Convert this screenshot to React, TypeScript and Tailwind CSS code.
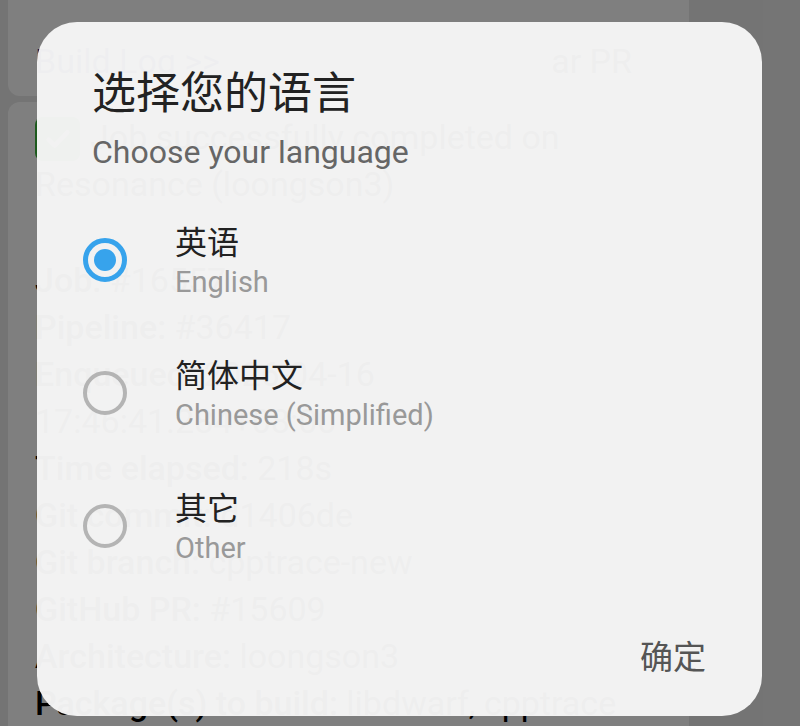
import React from "react";

const details: [string, string][] = [
  ["Job:", "#16557"],
  ["Pipeline:", "#36417"],
  ["Enqueued:", "2026-04-16 17:46:41.284+08:00"],
  ["Time elapsed:", "218s"],
  ["Git commit:", "d1406de"],
  ["Git branch:", "cpptrace-new"],
  ["GitHub PR:", "#15609"],
  ["Architecture:", "loongson3"],
  ["Package(s) to build:", "libdwarf, cpptrace"],
];

const languages = [
  { name: "英语", sub: "English", selected: true },
  { name: "简体中文", sub: "Chinese (Simplified)", selected: false },
  { name: "其它", sub: "Other", selected: false },
];

function Radio({ on }: { on: boolean }) {
  if (on) {
    return (
      <div className="flex h-[44px] w-[44px] shrink-0 items-center justify-center rounded-full border-[5px] border-[#37a3ec]">
        <div className="h-[22px] w-[22px] rounded-full bg-[#37a3ec]" />
      </div>
    );
  }
  return <div className="h-[44px] w-[44px] shrink-0 rounded-full border-[4px] border-[#b4b4b4]" />;
}

export default function App() {
  return (
    <div className="relative h-[726px] w-[800px] overflow-hidden bg-[#e9e9e9] font-['Roboto','Noto_Sans_CJK_SC',sans-serif]">
      {/* page behind the dialog */}
      <div className="flex w-[689px] flex-col gap-[6px] pl-[8px]">
        <div className="flex h-[96px] items-center justify-between rounded-b-[12px] bg-white px-[27px] pt-[26px] text-[34px] leading-[47px]">
          <span className="text-[#2a2a80]">Build Log &gt;&gt;</span>
          <span className="pr-[30px] text-black">ar PR</span>
        </div>
        <div className="rounded-t-[12px] bg-white px-[27px] pt-[12px] text-[34px] leading-[47px] text-black">
          <div className="flex gap-[10px]">
            <div className="mt-[3px] flex h-[44px] w-[45px] shrink-0 items-center justify-center rounded-[8px] bg-[#3bb53b]">
              <svg viewBox="0 0 24 24" className="h-[32px] w-[32px]" fill="none" stroke="white" strokeWidth="3.5" strokeLinecap="round" strokeLinejoin="round">
                <path d="M5 12.5l4.5 4.5L19 7" />
              </svg>
            </div>
            <span>Job successfully completed on</span>
          </div>
          <div>Resonance (loongson3)</div>
          <div className="mt-[49px] flex flex-col">
            {details.map(([k, v]) => (
              <div key={k}>
                <span className="font-medium">{k}</span> {v}
              </div>
            ))}
          </div>
        </div>
      </div>

      {/* scrim */}
      <div className="absolute inset-0 bg-black/50" />

      {/* dialog */}
      <div className="absolute left-[37px] top-[22px] flex h-[694px] w-[725px] flex-col rounded-[40px] bg-[#f6f6f6]/[0.97]">
        <div className="pl-[55px] pt-[46px]">
          <div className="text-[44px] leading-[52px] text-[#222]">选择您的语言</div>
          <div className="mt-[12px] text-[32px] leading-[40px] text-[#666]">Choose your language</div>
        </div>
        <div className="mt-[21px] flex flex-col">
          {languages.map((l) => (
            <div key={l.sub} className="flex h-[133px] items-center gap-[48px] pl-[46px]">
              <Radio on={l.selected} />
              <div className="mt-[4px] flex flex-col">
                <span className="text-[32px] leading-[40px] text-[#222]">{l.name}</span>
                <span className="text-[29px] leading-[38px] text-[#999]">{l.sub}</span>
              </div>
            </div>
          ))}
        </div>
        <div className="mt-auto flex justify-end pb-[38px] pr-[56px]">
          <span className="text-[33px] leading-[40px] text-[#555]">确定</span>
        </div>
      </div>
    </div>
  );
}
